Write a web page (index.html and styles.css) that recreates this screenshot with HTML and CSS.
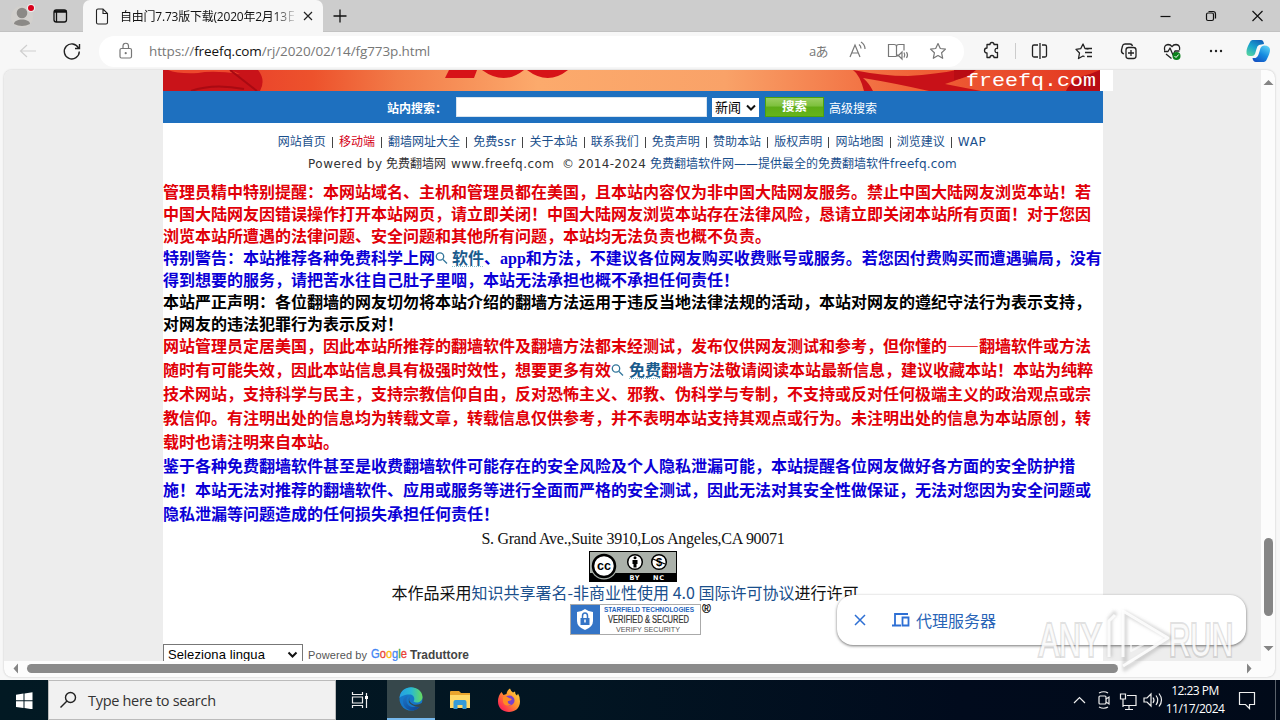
FILE: index.html
```html
<!DOCTYPE html>
<html lang="zh-CN">
<head>
<meta charset="utf-8">
<title>自由门7.73版下载</title>
<link rel="stylesheet" href="styles.css">
</head>
<body>
<div class="desktop">
  <header class="tabbar">
    <div class="tab-left">
      <svg width="83" height="32" viewBox="0 0 83 32"><circle cx="22" cy="17" r="11" fill="#d2d0cd"/><circle cx="22" cy="13" r="5.3" fill="#8b8986"/><path d="M14 24c0-6 16-6 16 0q-8 4-16 0z" fill="#8b8986"/><circle cx="31" cy="8" r="4" fill="#eee"/><circle cx="31" cy="8" r="3" fill="#d9001b"/><rect x="54" y="10" width="12.5" height="12" rx="2.3" fill="none" stroke="#111" stroke-width="1.300"/><path d="M54 11.500h12.500" stroke="#111" stroke-width="2.500"/><path d="M56.500 12v10" stroke="#111" stroke-width="1.300"/></svg>
    </div>
    <div class="tab">
      <svg width="14" height="17" viewBox="0 0 14 17"><path d="M1.5 2.5q0-1.500 1.500-1.500h5L12.500 5.500v9q0 1.500-1.500 1.500h-8q-1.500 0-1.500-1.500zM8 1v4.500h4.500" fill="none" stroke="#222" stroke-width="1.100"/></svg>
      <span class="tab-title">自由门7.73版下载(2020年2月13日</span>
      <svg class="tab-x" width="10" height="10"><path d="M1 1l8 8M9 1l-8 8" stroke="#222" stroke-width="1.200"/></svg>
    </div>
    <svg class="plus" width="16" height="16"><path d="M8 1.500v13M1.500 8h13" stroke="#111" stroke-width="1.300"/></svg>
    <svg class="winctl" width="130" height="32"><path d="M10.500 16.500h10" stroke="#111" stroke-width="1.200"/><rect x="56.500" y="13" width="7" height="7.500" rx="1.500" fill="none" stroke="#111" stroke-width="1.200"/><path d="M58.500 11.500h4.500q2.500 0 2.500 2.500v4.500" fill="none" stroke="#111" stroke-width="1.200"/><path d="M102.500 11l10 10M112.500 11l-10 10" stroke="#111" stroke-width="1.200"/></svg>
  </header>
  <div class="toolbar">
    <svg class="nav-icons" width="99" height="38"><path d="M36 19H21M27 13l-6.500 6 6.500 6" fill="none" stroke="#cfcfcf" stroke-width="1.200"/><path d="M78.500 16A7.500 7.500 0 1 0 79.300 19.500M79.500 12v4.500H75" fill="none" stroke="#222" stroke-width="1.400"/></svg>
    <div class="address">
      <svg width="14" height="18" viewBox="0 0 14 18"><rect x="1" y="6.500" width="11.500" height="9.500" rx="1.500" fill="none" stroke="#777" stroke-width="1.200"/><path d="M4 6.500v-2.500a2.750 2.750 0 0 1 5.500 0v2.500" fill="none" stroke="#777" stroke-width="1.200"/><circle cx="6.700" cy="11.200" r="1.100" fill="#777"/></svg>
      <span class="url">https://<b>freefq.com</b>/rj/2020/02/14/fg773p.html</span>
      <span class="aa">aあ</span>
      <svg class="addr-icons" width="100" height="26" viewBox="0 0 100 26"><g fill="none" stroke="#777" stroke-width="1.200"><path d="M3 19l5-12 5 12M5 15h6M12 6.500q2 1.500 2 4M14 4q4 2.500 4 7" transform="translate(1 0)"/><path d="M50.500 18.500h-8v-12h5.500q2.500 0 2.500 2v10M50.500 8.500q0-2 2.500-2h5v6M51 17h2l3-3v7l-3-3h-2zM58 14.500q1.500 2.500 0 5M60.500 14q2 3 0 6"/><path d="M92 5.500l2.300 5 5.200.6-3.900 3.700 1.100 5.500-4.700-2.800-4.700 2.800 1.100-5.500-3.900-3.700 5.200-.6z" stroke-linejoin="round"/></g></svg>
    </div>
    <svg class="tool-icons" width="316" height="38" viewBox="964 32 316 38"><g fill="none" stroke="#222" stroke-width="1.300" stroke-linejoin="round">
      <path d="M987 45h3q0-2 2-2t2 2h3.500v4q-2.500-.5-2.500 2t2.500 2v5H994q0-2-2-2t-2 2h-3v-4.500q-2.500 0-2.500-2.500t2.500-2.500z" transform="translate(0 -.5)"/>
      <path d="M1038 45h-4q-1.500 0-1.500 1.500v9q0 1.500 1.500 1.500h4M1042 45h3q1.500 0 1.500 1.500v9q0 1.500-1.500 1.500h-3M1040 43v16"/>
      <path d="M1088.500 49l-3.500-.500-2-4.500-2.300 4.700-4.700.7 3.500 3.600-1 5.500 4.500-2.500 1.500.7M1086 48.500h6M1085 52.500h7M1087 56.500h5"/>
      <path d="M1124 54q-3-1-2.500-4l1-4q.4-2 2.500-2h5q2 0 2.500 2"/><rect x="1126" y="47.500" width="10" height="11" rx="2.500"/><path d="M1131 50v6M1128 53h6"/>
      <path d="M1179.500 50q1-5-3.500-5.500-2.500 0-4 2.200-1.500-2.200-4-2.200-4.500.5-3.300 6M1164 51.500h4l2-3.500 3 7 2-4h4.500M1166 54l5.500 4.500"/></g>
      <path d="M1015.500 43v16" stroke="#ccc"/><circle cx="1176.500" cy="56" r="4" fill="#0b811a"/><path d="M1174.500 56l1.500 1.500 2.700-3" fill="none" stroke="#fff"/><g fill="#222"><circle cx="1211" cy="51" r="1.200"/><circle cx="1216" cy="51" r="1.200"/><circle cx="1221" cy="51" r="1.200"/></g>
      <defs><linearGradient id="ca" x1=".8" x2=".2" y2="1"><stop stop-color="#1160b8"/><stop offset=".5" stop-color="#18a3ce"/><stop offset="1" stop-color="#55d3a0"/></linearGradient><linearGradient id="cb" x1=".8" x2=".2" y2="1"><stop stop-color="#5cd0f4"/><stop offset=".5" stop-color="#168ce0"/><stop offset="1" stop-color="#1450c2"/></linearGradient></defs>
      <path d="M1252 40h9q2.500 0 3 4l-5 1q-2 1-2.500 4l-1.500 5q-1 2-3 2h-2q-4 0-3.500-4.500 0-3 3-8.500 1-3 3-3z" fill="url(#ca)"/><path d="M1264 62h-8q-3 0-3.500-4h3q2.500-1 3.500-5l1.500-5q1-2.500 3.500-2.500 6 0 6 4.500 0 3-3 9-1 3-3 3z" fill="url(#cb)"/></svg>
  </div>
  <div class="window-body">
    <div class="view-row">
      <main class="viewport">
        <div class="page">
          <svg class="banner" width="950" height="21" viewBox="0 0 950 21"><defs><linearGradient id="bn"><stop stop-color="#e6332a"/><stop offset=".16" stop-color="#ed522c"/><stop offset=".25" stop-color="#f27b48"/><stop offset=".4" stop-color="#fcaa6c"/><stop offset=".6" stop-color="#f9a268"/><stop offset=".8" stop-color="#f06338"/><stop offset="1" stop-color="#e2351f"/></linearGradient></defs><rect width="950" height="21" fill="#fff"/><rect width="937" height="21" fill="url(#bn)"/><path d="M0 0h95q8 10 2 21H0z" fill="#c91319"/><path d="M5 0h62l10 4Q50 0 35 3 15 4 5 0z" fill="#ed482d"/><path d="M67 0l27 21M28 21q22-8 53-2" fill="none" stroke="#a90a12" stroke-width="2"/><path d="M286 0h28l-3 8h-29zM319 0h42q-20 16-42 0zM364 0h41q-20 16-41 0z" fill="#d71318"/><path d="M690 0q30 6 55 6 29-2 49-6h16q-10 9-28 14l36 7h-52q-35-8-66-13 6 5 10 13h-9Q697 5 690 0z" fill="#c81118"/><path d="M791 0h22q-8 8-22 10zM903 21q5-12 24-17l10-4v21z" fill="#b90c14"/><text x="803" y="16" textLength="130" lengthAdjust="spacingAndGlyphs" font-family="Liberation Mono" font-size="18" fill="#fff">freefq.com</text></svg>
          <div class="search">
            <b>站内搜索：</b><span class="field"></span>
            <span class="select-small">新闻<svg width="10" height="7"><path d="M1 1.500l4 4 4-4" fill="none" stroke="#111" stroke-width="2"/></svg></span>
            <span class="go">搜索</span><span class="adv">高级搜索</span>
          </div>
          <nav class="links"><a>网站首页</a><i></i><a class="red">移动端</a><i></i><a>翻墙网址大全</a><i></i><a>免费<u>ssr</u></a><i></i><a>关于本站</a><i></i><a>联系我们</a><i></i><a>免责声明</a><i></i><a>赞助本站</a><i></i><a>版权声明</a><i></i><a>网站地图</a><i></i><a>浏览建议</a><i></i><a class="wap">WAP</a></nav>
          <div class="powered"><span class="pw">Powered by</span><span class="pz">免费翻墙网</span><span class="ps">www.freefq.com</span><span class="pc">©</span><span class="py">2014-2024</span><a>免费翻墙软件网——提供最全的免费翻墙软件</a><a class="pf">freefq.com</a></div>
          <div class="notice">
            <p class="r">管理员精中特别提醒：本网站域名、主机和管理员都在美国，且本站内容仅为非中国大陆网友服务。禁止中国大陆网友浏览本站！若<br>中国大陆网友因错误操作打开本站网页，请立即关闭！中国大陆网友浏览本站存在法律风险，恳请立即关闭本站所有页面！对于您因<br>浏览本站所遭遇的法律问题、安全问题和其他所有问题，本站均无法负责也概不负责。</p>
            <p class="b">特别警告：本站推荐各种免费科学上网<svg class="mag" width="17" height="14"><circle cx="5" cy="5.500" r="3.700"/><path d="M8 8.500l4 4"/></svg><a>软件</a>、<span class="app">app</span>和方法，不建议各位网友购买收费账号或服务。若您因付费购买而遭遇骗局，没有<br>得到想要的服务，请把苦水往自己肚子里咽，本站无法承担也概不承担任何责任！</p>
            <p class="k">本站严正声明：各位翻墙的网友切勿将本站介绍的翻墙方法运用于违反当地法律法规的活动，本站对网友的遵纪守法行为表示支持，<br>对网友的违法犯罪行为表示反对！</p>
            <p class="r wide lead">网站管理员定居美国，因此本站所推荐的翻墙软件及翻墙方法都末经测试，发布仅供网友测试和参考，但你懂的——翻墙软件或方法<br>随时有可能失效，因此本站信息具有极强时效性，想要更多有效<svg class="mag" width="18" height="14"><circle cx="5" cy="5.500" r="3.700"/><path d="M8 8.500l4 4"/></svg><a>免费</a>翻墙方法敬请阅读本站最新信息，建议收藏本站！本站为纯粹<br>技术网站，支持科学与民主，支持宗教信仰自由，反对恐怖主义、邪教、伪科学与专制，不支持或反对任何极端主义的政治观点或宗<br>教信仰。有注明出处的信息均为转载文章，转载信息仅供参考，并不表明本站支持其观点或行为。未注明出处的信息为本站原创，转<br>载时也请注明来自本站。</p>
            <p class="b wide">鉴于各种免费翻墙软件甚至是收费翻墙软件可能存在的安全风险及个人隐私泄漏可能，本站提醒各位网友做好各方面的安全防护措<br>施！本站无法对推荐的翻墙软件、应用或服务等进行全面而严格的安全测试，因此无法对其安全性做保证，无法对您因为安全问题或<br>隐私泄漏等问题造成的任何损失承担任何责任！</p>
          </div>
          <div class="postal">S. Grand Ave.,Suite 3910,Los Angeles,CA 90071</div>
          <svg class="cc" width="88" height="31" viewBox="0 0 88 31"><rect x=".5" y=".5" width="87" height="30" fill="#abb1aa" stroke="#000"/><path d="M1 22h86v8H1z"/><circle cx="15" cy="15" r="13.500" fill="#abb1aa"/><circle cx="15" cy="15" r="11" fill="#fff" stroke="#000" stroke-width="2.500"/><text x="8" y="19" textLength="14" lengthAdjust="spacingAndGlyphs" font-family="Liberation Sans" font-weight="700" font-size="13">cc</text><g fill="#fff" stroke="#000" stroke-width="1.500"><circle cx="46" cy="11" r="7.300"/><circle cx="70" cy="11" r="7.300"/></g><circle cx="46" cy="6.800" r="1.500"/><path d="M43.500 9h5v4h-1v3.500h-3V13h-1z"/><text x="67" y="15" font-family="Liberation Sans" font-weight="700" font-size="11">$</text><path d="M64 8l12 5" stroke="#000" stroke-width="1.300"/><g fill="#fff" font-family="DejaVu Sans" font-size="6.500" font-weight="700"><text x="40.500" y="28.500" textLength="10">BY</text><text x="64" y="28.500" textLength="11">NC</text></g></svg>
          <div class="license">本作品采用<a>知识共享署名-非商业性使用 4.0 国际许可协议</a>进行许可</div>
          <svg class="seal" width="146" height="32" viewBox="0 0 146 32"><rect x=".5" y=".5" width="130" height="30" fill="#fff" stroke="#aaa"/><path d="M1 1h29v29H1z" fill="#3474c6"/><path d="M15 5q4 3 8 3v9q0 6-8 9-8-3-8-9V8q4 0 8-3z" fill="#fff"/><path d="M12.500 14v-2q0-3 2.500-3t2.500 3v2" fill="none" stroke="#3474c6" stroke-width="1.500"/><path d="M10.500 14h9v7h-9z" fill="#3474c6"/><path d="M15 15.500v3" stroke="#fff" stroke-width="1.500"/><g font-family="Liberation Sans"><text x="34" y="8" font-size="7" font-weight="700" fill="#2464bd" textLength="90" lengthAdjust="spacingAndGlyphs">STARFIELD TECHNOLOGIES</text><text x="38" y="19" font-size="10" fill="#333" stroke="#333" stroke-width=".2" textLength="81" lengthAdjust="spacingAndGlyphs">VERIFIED &amp; SECURED</text><text x="46" y="28" font-size="7" fill="#555" textLength="64" lengthAdjust="spacingAndGlyphs">VERIFY SECURITY</text><text x="132" y="9" font-size="12" fill="#000" stroke="#000" stroke-width=".2">®</text></g></svg>
          <div class="translate"><span class="lang">Seleziona lingua<svg width="11" height="8"><path d="M1.500 1.500l4 4 4-4" fill="none" stroke="#111" stroke-width="2"/></svg></span><span class="pby">Powered by</span><svg width="100" height="16" viewBox="0 0 100 16"><g font-family="Liberation Sans" font-size="12"><text x="0" y="12" stroke-width=".3" textLength="36" lengthAdjust="spacingAndGlyphs"><tspan fill="#4285f4" stroke="#4285f4">G</tspan><tspan fill="#ea4335" stroke="#ea4335">o</tspan><tspan fill="#fbbc05" stroke="#fbbc05">o</tspan><tspan fill="#4285f4" stroke="#4285f4">g</tspan><tspan fill="#34a853" stroke="#34a853">l</tspan><tspan fill="#ea4335" stroke="#ea4335">e</tspan></text><text x="39" y="12.500" font-weight="700" font-size="12.500" fill="#444" textLength="59" lengthAdjust="spacingAndGlyphs">Traduttore</text></g></svg></div>
        </div>
      </main>
      <div class="vscroll"><svg width="14" height="591"><path d="M2.500 15l5-5 5 5zM2.500 576l5 5 5-5z" fill="#858585"/><rect x="3" y="468" width="9" height="78" rx="4.500" fill="#858585"/></svg></div>
    </div>
    <div class="hscroll"><svg width="1271" height="16"><path d="M14 2.500v10L9.500 7.500zM1243 2.500v10l4.500-5z" fill="#858585"/><rect x="23" y="3" width="1091" height="9" rx="4.500" fill="#8a8a8a"/></svg></div>
  </div>
  <footer class="taskbar">
    <div class="start"><svg width="17" height="17" viewBox="0 0 17 17"><path d="M0 2.700l7.500-1.100v6.700H0zM8.500 1.400L16.500.3v8H8.500zM0 9.300h7.500V16L0 14.900zM8.500 9.300h8v8l-8-1.200z" fill="#fff"/></svg></div>
    <div class="tasksearch"><svg width="18" height="18"><circle cx="11.500" cy="6.500" r="5" fill="none" stroke="#222" stroke-width="1.400"/><path d="M8 10L1.500 16.500" stroke="#222" stroke-width="1.400"/></svg><span>Type here to search</span></div>
    <div class="task first"><svg width="18" height="18" viewBox="0 0 18 18"><path d="M1.500 1v2.500h10V1M1.500 17v-2.500h10V17M1.500 6h10v6h-10zM15.500 2v15" fill="none" stroke="#eee" stroke-width="1.200"/><path d="M14 5h3v3h-3z" fill="#fff"/></svg></div>
    <div class="task active"><svg width="24" height="24" viewBox="0 0 24 24"><defs><linearGradient id="ea"><stop stop-color="#259fe3"/><stop offset=".5" stop-color="#29b9d2"/><stop offset="1" stop-color="#66db5d"/></linearGradient><linearGradient id="eb" y2="1"><stop stop-color="#1d75c5"/><stop offset="1" stop-color="#0d3f8d"/></linearGradient></defs><circle cx="12" cy="12" r="11.500" fill="#1677c8"/><path d="M.5 11C2-4 23-2 23.500 10c0 5-6 7-9 4.500 2-3 0-7-4-7-5 0-9 2-10 3.500z" fill="url(#ea)"/><path d="M9 9c-3 3-2 11 6 11 3 0 5-1 7-2-4 7-12 7-16 2C2 15 4 9 9 9z" fill="url(#eb)"/><path d="M10.500 10q-2 5 4 7.500 4 1 9.500-2v2.500q-1.500 1.500-4 2-4 0-7-2-5-3-2.500-8z" fill="#36474b"/></svg></div>
    <div class="task"><svg width="22" height="20" viewBox="0 0 22 20"><path d="M1 2q0-1 1-1h8l2 2h9v15H1z" fill="#e9a52d"/><path d="M1 5h20v13H1z" fill="#ffd968"/><path d="M4.500 19v-7q0-2 2-2h9q2 0 2 2v7h-4v-4h-5v4z" fill="#349bd8"/></svg></div>
    <div class="task"><svg width="24" height="24" viewBox="0 0 24 24"><defs><linearGradient id="ff" x1="1" x2="0" y2="1"><stop stop-color="#ffe545"/><stop offset=".45" stop-color="#ff932d"/><stop offset=".8" stop-color="#ff334e"/><stop offset="1" stop-color="#df1873"/></linearGradient></defs><path d="M4.500 4l2 3 3-1Q10 2 13 0.500q1 3 3 4l2-1q0 3 2 4l1-2q2 3 2 8c0 14-22 14-22 0q0-6 3.500-9.500z" fill="url(#ff)"/><circle cx="12.500" cy="12.500" r="5" fill="#7942cb"/><path d="M6 9q4-1 6 1l3 1q-1 2-4 2-1 3 3 3.500-6 3-8-2.500z" fill="#ff8b24"/></svg></div>
    <svg class="tray" width="98" height="40" viewBox="0 0 98 40"><g fill="none" stroke="#eee" stroke-width="1.200"><path d="M3 23l5.500-5.500L14 23"/><rect x="28" y="16" width="7" height="8" rx="1"/><path d="M35 19l3-2v7l-3-2M28 13q5-2.500 9 0M28 27q5 2.500 9 0"/><path d="M56 15.500h9v10H52v-6M58 26v3M54 29.500h8M49.500 14h5v5h-5zM52 19v8"/><path d="M73 18h3l4-4v12l-4-4h-3zM82 17.500q2 2.500 0 5.500M85 15.500q3.500 4.500 0 9.500M88 13.500q5 6.500 0 13"/></g></svg>
    <div class="clock"><span>12:23 PM</span><span>11/17/2024</span></div>
    <svg class="notify" width="49" height="40"><path d="M8.500 12.500h15v12h-5v4l-4-4h-6z" fill="none" stroke="#eee" stroke-width="1.200"/><path d="M44.500 0v40" stroke="#5a626b"/></svg>
  </footer>
  <div class="pill"><svg width="12" height="12"><path d="M1 1l10 10M11 1L1 11" stroke="#2d6fd4" stroke-width="1.500"/></svg><svg class="dev" width="18" height="14"><path d="M16 1H3v11M0 12.500h9M10.500 4.500h6v8h-6z" fill="none" stroke="#2d6fd4" stroke-width="1.800"/></svg><span>代理服务器</span></div>
  <svg class="mark" width="204" height="78" viewBox="0 0 204 78"><defs><filter id="sh" x="-10%" y="-10%" width="120%" height="120%"><feGaussianBlur stdDeviation="1.500"/></filter></defs><g filter="url(#sh)" fill="none" stroke="#888" stroke-opacity=".3" stroke-width="5"><path d="M76 56V18l6-7M91 12l46 25-46 31z" stroke-linejoin="round"/></g><g fill="none" stroke="#fff" stroke-opacity=".85" stroke-width="3" stroke-linejoin="round"><path d="M75 56V20l6-6M89 56V10l45 27-45 28"/><path d="M97 28v22l24-13z" stroke-opacity=".6" stroke-width="2"/></g><g font-family="Liberation Sans" font-size="46"><text x="5" y="55" textLength="62" lengthAdjust="spacingAndGlyphs" fill="#fff" fill-opacity=".85" stroke="#888" stroke-opacity=".25" stroke-width="4" paint-order="stroke">ANY</text><text x="135" y="55" textLength="64" lengthAdjust="spacingAndGlyphs" fill="#fff" fill-opacity=".85" stroke="#888" stroke-opacity=".25" stroke-width="4" paint-order="stroke">RUN</text></g></svg>
</div>
</body>
</html>
```
FILE: styles.css
```css
* { box-sizing: border-box; }
body { margin: 0; overflow: hidden; }
svg { display: block; flex: none; }
p { margin: 0; }
.desktop { position: relative; display: flex; flex-direction: column; width: 1280px; height: 720px; background: #f7f7f7; font-family: "Open Sans", "Noto Sans CJK SC", sans-serif; overflow: hidden; }
.tabbar { display: flex; align-items: center; height: 32px; flex: none; background: #cdcdcd; border-bottom: 1px solid #c2c2c2; }
.tab-left { width: 83px; }
.tab { display: flex; align-items: center; width: 240px; height: 32px; align-self: flex-start; background: #f7f7f7; border-radius: 7px 7px 0 0; padding-left: 12px; }
.tab-title { width: 174px; margin-left: 11px; white-space: nowrap; overflow: hidden; font-size: 12px; letter-spacing: -.22px; color: #111; -webkit-mask-image: linear-gradient(90deg, #000 155px, transparent 178px); mask-image: linear-gradient(90deg, #000 155px, transparent 178px); }
.tab-x { margin-left: 9px; }
.plus { margin-left: 9px; }
.winctl { margin-left: auto; }
.toolbar { display: flex; align-items: center; height: 38px; flex: none; background: #f7f7f7; }
.address { display: flex; align-items: center; width: 865px; height: 31px; border-radius: 16px; background: #fff; padding-left: 20px; }
.url { width: 300px; margin-left: 16px; font-size: 13.5px; letter-spacing: -.11px; color: #777; white-space: nowrap; }
.url b { color: #111; font-weight: 400; }
.aa { margin-left: 360px; width: 37px; padding-bottom: 2px; font-size: 13px; letter-spacing: -.8px; color: #777; white-space: nowrap; }
.window-body { height: 607px; flex: none; margin: 0 5px 3px 4px; background: #fcfcfc; border-radius: 8px; overflow: hidden; box-shadow: 0 0 2px #bbb; }
.view-row { display: flex; height: 591px; }
.viewport { width: 1257px; height: 591px; background: #ededed; padding-left: 159px; overflow: hidden; }
.vscroll { width: 14px; }
.page { display: flex; flex-direction: column; align-items: center; width: 940px; height: 640px; background: #fff; }
.banner { align-self: flex-start; overflow: visible; }
.search { display: flex; align-items: center; width: 940px; height: 32px; padding-left: 224px; background: #1e70bf; color: #fff; font-size: 12px; }
.search b { width: 69px; padding-top: 1px; white-space: nowrap; }
.field { width: 251px; height: 20px; background: #fff; border: 1px solid #d8e4ee; }
.select-small { display: flex; align-items: center; justify-content: space-between; width: 47px; height: 19px; margin: 0 6px 0 5px; padding: 0 3px; background: #fff; color: #000; font-size: 13px; line-height: 19px; }
.go { width: 59px; height: 20px; line-height: 18px; text-align: center; font-weight: 700; font-size: 12.5px; background: linear-gradient(#9ccf62, #7dc03c 45%, #5dac17 50%, #66b41a); border: 1px solid #4da30c; }
.adv { margin-left: 5px; padding-top: 1px; }
.links { display: flex; align-items: center; height: 22px; margin-top: 8px; padding-right: 2px; font: 12px/22px "DejaVu Sans", "Noto Sans CJK SC", sans-serif; white-space: nowrap; }
.links a, .powered a, .license a { color: #1a4f8c; }
.links a.red { color: #d40016; }
.links u { text-decoration: none; letter-spacing: .5px; }
.links .wap { letter-spacing: .6px; }
.links i { width: 1px; height: 11px; margin: 0 6.1px; background: #444; }
.powered { display: flex; align-self: flex-start; height: 22px; margin-left: 145px; font: 12px/22px "DejaVu Sans", "Noto Sans CJK SC", sans-serif; color: #333; white-space: nowrap; }
.pw { width: 78px; letter-spacing: .5px; }
.pz { width: 65px; }
.ps { width: 111px; letter-spacing: .45px; }
.pc { width: 16px; }
.py { width: 72px; letter-spacing: .3px; }
.pf { letter-spacing: .2px; }
.notice { align-self: flex-start; width: 940px; height: 352px; padding-top: 5px; font: 700 16px/22px "Noto Sans CJK SC", sans-serif; white-space: nowrap; text-spacing-trim: space-all; }
.notice a { color: #1a5b8c; text-decoration: underline dotted #8abecb 1px; text-underline-offset: 2px; }
.notice .r { color: #e10008; }
.notice .b { color: #0b00d6; }
.notice .k { color: #000; }
.notice .wide { line-height: 24px; }
.notice .lead { margin-top: -1px; }
.app { font-family: "Liberation Serif", serif; line-height: 1; }
.mag { display: inline-block; vertical-align: -1px; fill: none; stroke: #31759b; stroke-width: 1.3; }
.postal { height: 24px; font: 16px/24px "Liberation Serif", serif; color: #111; white-space: nowrap; letter-spacing: -.27px; }
.license { height: 22px; padding-right: 16px; font: 16px/21px "Noto Sans CJK SC", sans-serif; color: #111; white-space: nowrap; }
.seal { align-self: flex-start; margin-left: 407px; }
.translate { display: flex; align-self: flex-start; height: 22px; margin-top: 8px; font-family: "Liberation Sans", sans-serif; }
.lang { display: flex; align-items: center; justify-content: space-between; width: 140px; height: 21px; padding: 0 4px; border: 1px solid #777; font-size: 13px; letter-spacing: .1px; white-space: nowrap; }
.pby { width: 63px; margin-left: 5px; font-size: 11px; line-height: 22px; color: #555; white-space: nowrap; letter-spacing: .1px; }
.translate > svg { margin-top: 2px; }
.taskbar { display: flex; align-items: center; height: 40px; flex: none; background: linear-gradient(90deg, #021923, #021522 45%, #010b1d 75%, #010a19); }
.start { display: flex; width: 48px; justify-content: center; }
.tasksearch { display: flex; align-items: center; width: 288px; height: 40px; padding-left: 10px; background: #f1f1f1; border: 1px solid #bbb; color: #333; }
.tasksearch span { margin-left: 11px; font-size: 14.5px; letter-spacing: -.3px; white-space: nowrap; }
.task { display: flex; align-items: center; justify-content: center; width: 49px; height: 40px; }
.first { width: 51px; padding-right: 3px; }
.active { width: 48px; background: #36474b; border-bottom: 2px solid #76b9ed; }
.tray { margin-left: auto; }
.clock { display: flex; flex-direction: column; align-items: center; width: 62px; padding-right: 10px; font-size: 12px; line-height: 18px; letter-spacing: -.5px; color: #fff; white-space: nowrap; }
.pill { position: absolute; left: 837px; top: 595px; display: flex; align-items: center; width: 409px; height: 50px; padding: 0 0 1px 17px; border-radius: 16px; background: #fff; box-shadow: 0 1px 3px rgba(0,0,0,.55); font-size: 16px; color: #2864b7; }
.dev { margin: 0 6px 0 26px; }
.mark { position: absolute; left: 1034px; top: 601px; }
```
